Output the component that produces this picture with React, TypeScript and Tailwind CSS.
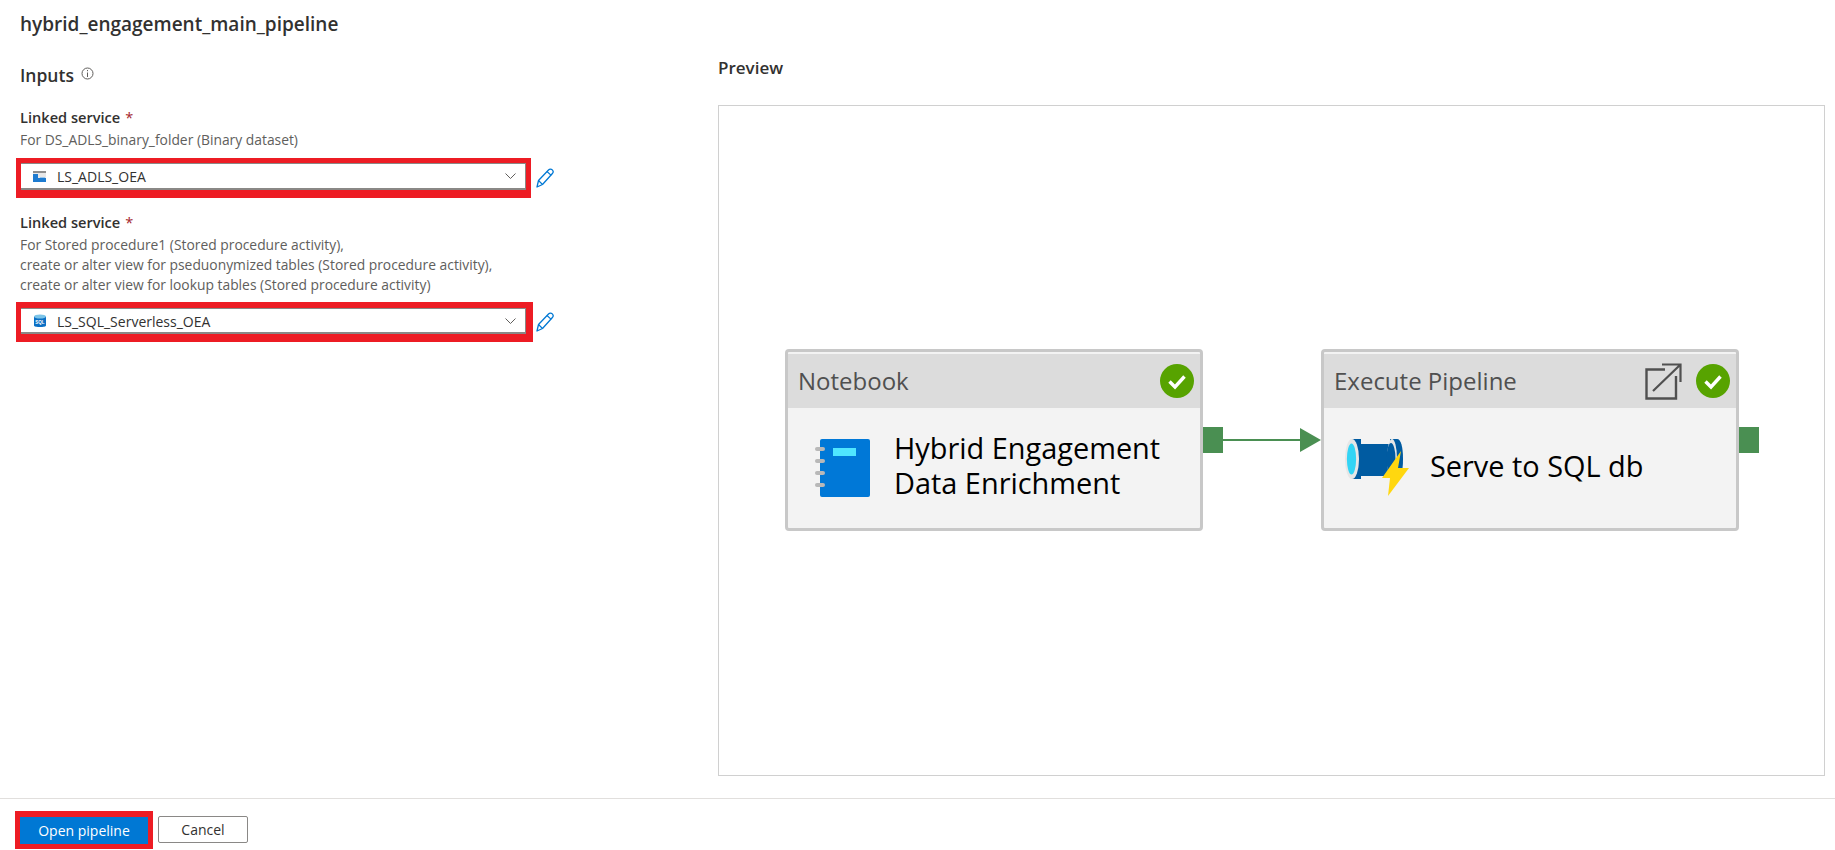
import React from "react";

function Chevron() {
  return (
    <svg width="11" height="6" viewBox="0 0 11 6" fill="none" className="shrink-0">
      <path d="M0.5 0.5 L5.5 5.5 L10.5 0.5" stroke="#605e5c" strokeWidth="1" />
    </svg>
  );
}

function Pencil() {
  return (
    <svg width="18" height="20" viewBox="0 0 18 20" fill="none" className="shrink-0">
      <path d="M1 19 L2.5 12.5 L12.5 2 C13.6 0.8 15.2 0.8 16.3 1.9 C17.4 3 17.4 4.4 16.4 5.5 L6.5 16.5 Z" stroke="#0078d4" strokeWidth="1.3" strokeLinejoin="round" />
      <path d="M11 3.5 L15.2 7.4 M2.5 12.5 L6.5 16.5" stroke="#0078d4" strokeWidth="1.1" />
    </svg>
  );
}

function StoreIcon() {
  return (
    <svg width="13" height="11" viewBox="0 0 13 11">
      <rect x="0" y="0" width="13" height="11" fill="#8f8f8f" />
      <rect x="0" y="2" width="13" height="9" fill="#e8e8e8" />
      <rect x="0" y="3" width="5" height="8" fill="#1e7bd0" />
      <rect x="0" y="7" width="13" height="4" fill="#1e7bd0" />
      <rect x="7" y="6" width="5" height="1" fill="#9cc8ee" />
    </svg>
  );
}

function SqlIcon() {
  return (
    <svg width="14" height="14" viewBox="0 0 14 14">
      <path d="M1 2.5 V11.5 C1 13.6 13 13.6 13 11.5 V2.5 Z" fill="#0b6fc4" />
      <ellipse cx="7" cy="2.5" rx="6" ry="2" fill="#7cc4e8" />
      <text x="7" y="9.5" textAnchor="middle" fontSize="4.5" fill="#ffffff" fontFamily="Liberation Sans, sans-serif" fontWeight="700">SQL</text>
    </svg>
  );
}

function Field({ desc, value, icon, redClass, innerClass, pencilClass, gapClass }: { desc: string[]; value: string; icon: React.ReactNode; redClass: string; innerClass: string; pencilClass: string; gapClass: string }) {
  return (
    <div className="flex flex-col">
      <div className="flex items-start h-[20px] text-[14.6px] leading-[20px] font-semibold text-[#323130]">
        Linked service <span className="ml-[5px] font-normal text-[#a4262c]">*</span>
      </div>
      <div className="mt-[3px] text-[13.85px] leading-[20px] text-[#605e5c]">
        {desc.map((d) => (
          <div key={d}>{d}</div>
        ))}
      </div>
      <div className={`flex items-center ${gapClass} -ml-[4px]`}>
        <div className={`${redClass} h-[40px] border-[#ed1c24] border-b-[8px] border-l-[5px] bg-white`}>
          <div className={`${innerClass} flex items-center border border-[#8a8886] border-b-2 border-l-0 pl-[12px] pr-[9px]`}>
            <div className="w-[24px] flex justify-start">{icon}</div>
            <div className="flex-1 pt-[2px] text-[14px] leading-[20px] text-[#323130]">{value}</div>
            <Chevron />
          </div>
        </div>
        <div className={pencilClass}>
          <Pencil />
        </div>
      </div>
    </div>
  );
}

function Check() {
  return (
    <svg width="34" height="34" viewBox="0 0 34 34" className="shrink-0">
      <circle cx="17" cy="17" r="17" fill="#57a300" />
      <path d="M9.5 17.5 L15 23 L24.5 12.5" fill="none" stroke="#ffffff" strokeWidth="3.4" />
    </svg>
  );
}

function ExternalLink() {
  return (
    <svg width="37" height="37" viewBox="0 0 37 37" fill="none" className="shrink-0">
      <path d="M20 6.5 H1.5 V35.5 H31 V13" stroke="#505050" strokeWidth="2.4" />
      <path d="M8 28 L35.5 1.5 M17 1.5 H35.5 V19" stroke="#505050" strokeWidth="2.2" />
    </svg>
  );
}

function NotebookIcon() {
  return (
    <svg width="55" height="58" viewBox="0 0 55 58">
      <rect x="5" y="0" width="50" height="58" rx="2" fill="#0078d7" />
      <rect x="18" y="9" width="23" height="8" fill="#50e6ff" />
      {[8, 20, 32, 44].map((y) => (
        <rect key={y} x="0" y={y} width="10" height="4" rx="2" fill="#b8b8b8" />
      ))}
    </svg>
  );
}

function PipeIcon() {
  return (
    <svg width="64" height="58" viewBox="0 0 64 58">
      <rect x="12" y="5" width="36" height="32" fill="#005ba1" />
      <path d="M7 0 H16 V40 H7 Z" fill="#005ba1" />
      <path d="M45 0 H52 C56 0 58 8 58 20 C58 32 56 40 52 40 H45 Z" fill="#005ba1" />
      <ellipse cx="47" cy="20" rx="5" ry="20" fill="#e6e6e6" />
      <ellipse cx="46" cy="20" rx="4.5" ry="16" fill="#005ba1" />
      <ellipse cx="7" cy="20" rx="7" ry="20" fill="#e6e6e6" />
      <ellipse cx="6.5" cy="20" rx="4.6" ry="15.5" fill="#32d4f5" />
      <path d="M56 12 L37 39 L45 39 L43 57 L64 29 L53 29 Z" fill="#ffd70f" />
    </svg>
  );
}

function Node({ title, lines, icon, iconClass, link }: { title: string; lines: string[]; icon: React.ReactNode; iconClass: string; link?: boolean }) {
  return (
    <div className="w-[418px] h-[182px] shrink-0 rounded-[4px] border-[3px] border-[#c8c8c8] bg-[#f3f3f3] flex flex-col">
      <div className="h-[54px] mt-[2px] bg-[#dcdcdc] flex items-center pl-[10px] pr-[6px]">
        <div className="flex-1 text-[24px] text-[#505050]">{title}</div>
        {link && <div className="mr-[14px]"><ExternalLink /></div>}
        <Check />
      </div>
      <div className="flex-1 flex items-start pt-[31px]">
        <div className={iconClass}>{icon}</div>
        <div className={`text-[28.9px] leading-[35px] text-black ${lines.length === 1 ? "mt-[9px]" : "-mt-[9px]"}`}>
          {lines.map((l) => (
            <div key={l}>{l}</div>
          ))}
        </div>
      </div>
    </div>
  );
}

function Port() {
  return <div className="w-[20px] h-[26px] shrink-0 bg-[#4a8f52]" />;
}

export default function App() {
  return (
    <div className="w-[1835px] h-[850px] bg-white flex flex-col overflow-hidden font-['Open_Sans',sans-serif]">
      <div className="flex flex-1 min-h-0">
        <div className="w-[718px] shrink-0 pl-[20px]">
          <div className="mt-[11px] text-[19px] leading-[26px] font-semibold text-[#323130]">hybrid_engagement_main_pipeline</div>
          <div className="mt-[25px] h-[26px] flex items-start text-[17.5px] leading-[26px] font-semibold text-[#323130]">
            Inputs
            <svg width="13" height="13" viewBox="0 0 13 13" fill="none" className="ml-[7px] mt-[5px]">
              <circle cx="6.5" cy="6.5" r="5.5" stroke="#605e5c" />
              <path d="M6.5 5.5 V10 M6.5 3 V4.2" stroke="#605e5c" />
            </svg>
          </div>
          <div className="mt-[19px]">
            <Field
              desc={["For DS_ADLS_binary_folder (Binary dataset)"]}
              value="LS_ADLS_OEA"
              icon={<StoreIcon />}
              redClass="w-[515px] border-t-[5px] border-r-[5px]"
              innerClass="h-[27px]"
              pencilClass="ml-[5px]"
              gapClass="mt-[8px]"
            />
          </div>
          <div className="mt-[14px]">
            <Field
              desc={[
                "For Stored procedure1 (Stored procedure activity),",
                "create or alter view for pseduonymized tables (Stored procedure activity),",
                "create or alter view for lookup tables (Stored procedure activity)",
              ]}
              value="LS_SQL_Serverless_OEA"
              icon={<SqlIcon />}
              redClass="w-[517px] border-t-[6px] border-r-[7px]"
              innerClass="h-[26px]"
              pencilClass="ml-[3px]"
              gapClass="mt-[7px]"
            />
          </div>
        </div>
        <div className="flex-1 min-w-0 pr-[10px] flex flex-col">
          <div className="mt-[56px] h-[24px] text-[17px] leading-[24px] font-semibold text-[#323130]">Preview</div>
          <div className="mt-[25px] h-[671px] border border-[#d0d0d0] flex items-center pl-[66px] pb-[1px]">
            <Node title="Notebook" lines={["Hybrid Engagement", "Data Enrichment"]} icon={<NotebookIcon />} iconClass="pl-[27px] pr-[24px]" />
            <Port />
            <div className="w-[77px] h-[2px] bg-[#4a8f52] shrink-0" />
            <svg width="21" height="24" viewBox="0 0 21 24" className="shrink-0">
              <path d="M0 0 L21 12 L0 24 Z" fill="#4a8f52" />
            </svg>
            <Node title="Execute Pipeline" lines={["Serve to SQL db"]} icon={<PipeIcon />} iconClass="pl-[21px] pr-[21px]" link />
            <Port />
          </div>
        </div>
      </div>
      <div className="h-[52px] shrink-0 border-t border-[#e1dfdd] flex items-center pl-[15px] gap-[5px]">
        <div className="w-[138px] h-[38px] mt-[11px] border-[#ed1c24] border-t-[6px] border-b-[5px] border-x-[5px] bg-[#0078d4] flex items-center justify-center text-[14px] text-white">
          Open pipeline
        </div>
        <div className="w-[90px] h-[27px] mt-[10px] rounded-[2px] border border-[#8a8886] bg-white flex items-center justify-center text-[14px] text-[#323130]">
          Cancel
        </div>
      </div>
    </div>
  );
}
